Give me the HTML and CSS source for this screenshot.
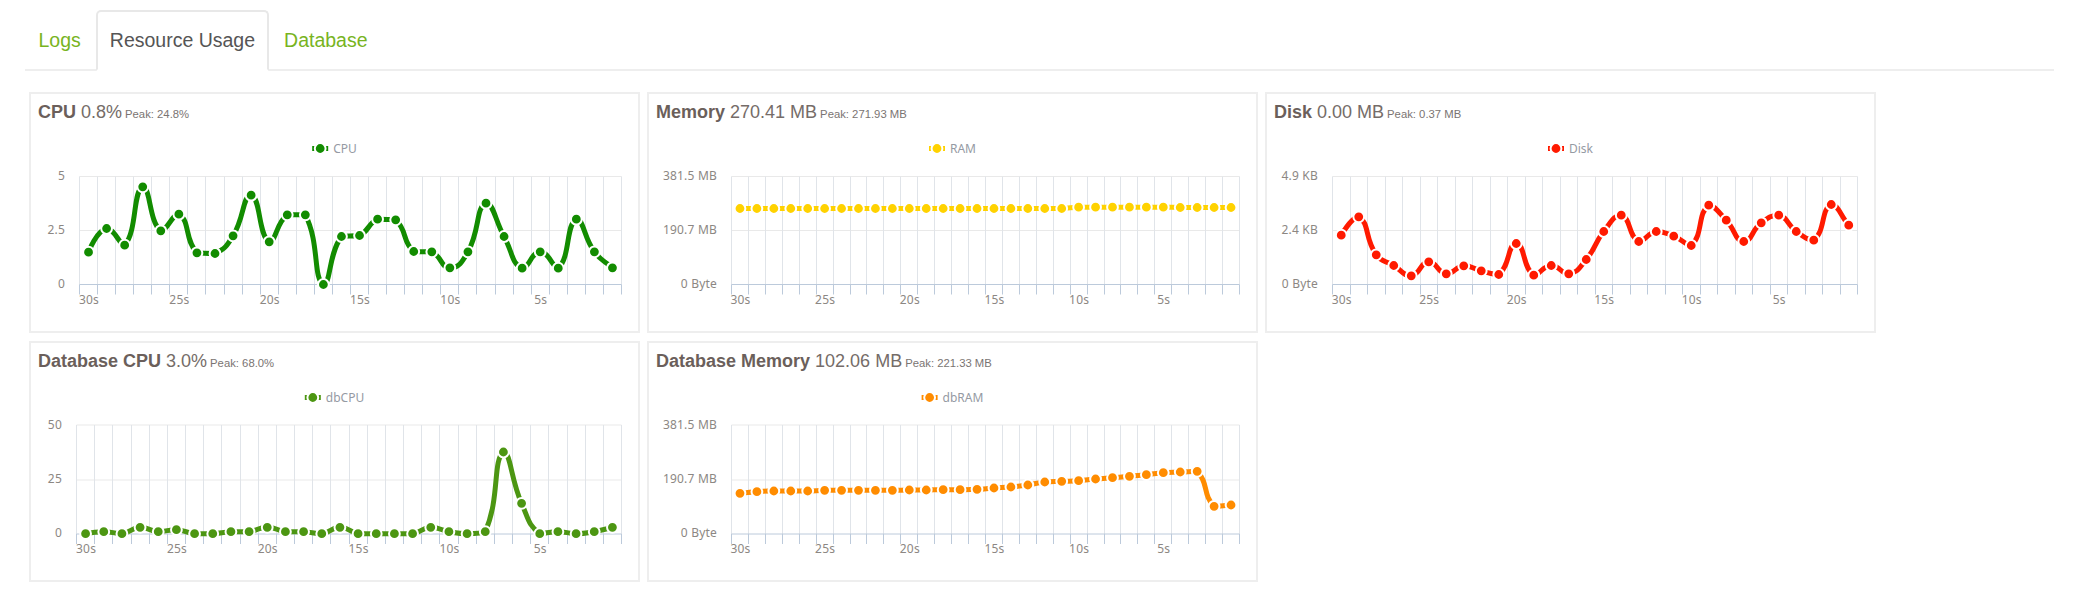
FILE: index.html
```html
<!DOCTYPE html>
<html lang="en">
<head>
<meta charset="utf-8">
<title>Resource Usage</title>
<link rel="stylesheet" href="styles.css">
</head>
<body>
<ul class="tabs">
  <li><a href="#logs">Logs</a></li>
  <li class="active"><a href="#usage">Resource Usage</a></li>
  <li><a href="#database">Database</a></li>
</ul>
<main class="grid">
  <section class="card">
    <h3 class="title"><b>CPU</b> 0.8% <small>Peak: 24.8%</small></h3>
    <svg class="chart" id="cpu" viewBox="0 0 606 197"></svg>
  </section>
  <section class="card">
    <h3 class="title"><b>Memory</b> 270.41 MB <small>Peak: 271.93 MB</small></h3>
    <svg class="chart" id="ram" viewBox="0 0 606 197"></svg>
  </section>
  <section class="card">
    <h3 class="title"><b>Disk</b> 0.00 MB <small>Peak: 0.37 MB</small></h3>
    <svg class="chart" id="disk" viewBox="0 0 606 197"></svg>
  </section>
  <section class="card">
    <h3 class="title"><b>Database CPU</b> 3.0% <small>Peak: 68.0%</small></h3>
    <svg class="chart" id="dbcpu" viewBox="0 0 606 197"></svg>
  </section>
  <section class="card">
    <h3 class="title"><b>Database Memory</b> 102.06 MB <small>Peak: 221.33 MB</small></h3>
    <svg class="chart" id="dbram" viewBox="0 0 606 197"></svg>
  </section>
</main>
<script src="charts.js"></script>
</body>
</html>
```
FILE: styles.css
```css
* { box-sizing: border-box; }
html, body { margin: 0; padding: 0; background: #fff; }
body { font-family: "Liberation Sans", Arial, sans-serif; overflow: hidden; }

.tabs {
  display: flex;
  list-style: none;
  width: 2029px;
  height: 61px;
  margin: 10px 0 0 25px;
  padding: 0;
  border-bottom: 2px solid #eeeeee;
}
.tabs li { margin-right: 2px; height: 61px; }
.tabs a {
  display: block;
  height: 61px;
  padding: 14px 11.5px 15px;
  border: 2px solid transparent;
  border-radius: 5px 5px 0 0;
  font-size: 19.5px;
  line-height: 28px;
  color: #78b41e;
  text-decoration: none;
}
.tabs .active a {
  color: #555555;
  background: #fff;
  border-color: #e8e8e8 #e8e8e8 #fff;
}

.grid {
  display: grid;
  grid-template-columns: repeat(3, 611px);
  grid-auto-rows: 241px;
  column-gap: 7px;
  row-gap: 8px;
  margin: 21px 0 0 29px;
}
.card {
  border: 2px solid #eeeeee;
  background: #fff;
  overflow: hidden;
}
.title {
  height: 40px;
  margin: 0;
  padding: 6px 7px 0;
  font-size: 18px;
  font-weight: 400;
  line-height: 24px;
  color: #756c68;
}
.title b { font-weight: 700; color: #6b5f5b; }
.title small { margin-left: -2px; font-size: 11.3px; color: #7a7472; }

.chart { display: block; width: 606px; height: 197px; }
.grid-v { stroke: #e0e4e9; stroke-width: 1; }
.grid-h { stroke: #e9e9e9; stroke-width: 1; }
.axis { stroke: #bccadb; stroke-width: 1; }
.label { font-family: "Noto Sans", sans-serif; font-size: 12px; letter-spacing: 0.2px; fill: #8c8783; }
.legend-text { font-family: "Noto Sans", sans-serif; font-size: 12px; fill: #959aa3; }
.line { fill: none; stroke-width: 5; stroke-linejoin: bevel; }
.dot { stroke: #fff; stroke-width: 2; }
```
FILE: charts.js
```js
var NS = "http://www.w3.org/2000/svg";
var charts = [
  { id: "cpu", color: "#128c00", name: "CPU", left: 48.5, row: 0, ticks: ["5", "2.5", "0"],
    data: [97,168,118,293,161,211,95,93,146,268,128,209,209,0,144,147,196,194,99,98,50,98,244,144,49,98,49,196,98,50] },
  { id: "ram", color: "#ffd200", name: "RAM", left: 82.5, row: 0, ticks: ["381.5 MB", "190.7 MB", "0 Byte"],
    data: [228,228,228,228,228,228,228,228,228,228,228,228,228,228,228,228,228,228,228,228,232,232,232,232,232,232,231,231,231,231] },
  { id: "disk", color: "#ff1a00", name: "Disk", left: 65.5, row: 0, ticks: ["4.9 KB", "2.4 KB", "0 Byte"],
    data: [148,203,89,57,26,68,32,56,41,30,123,28,57,32,75,159,208,129,159,145,117,238,193,129,185,208,159,133,240,178] },
  { id: "dbcpu", color: "#4c9612", name: "dbCPU", left: 45.5, row: 1, ticks: ["50", "25", "0"],
    data: [1,7,1,20,7,13,1,1,7,7,20,7,7,1,20,1,1,1,1,20,7,1,7,246,92,1,7,1,7,20] },
  { id: "dbram", color: "#ff8c00", name: "dbRAM", left: 82.5, row: 1, ticks: ["381.5 MB", "190.7 MB", "0 Byte"],
    data: [122,127,129,129,129,131,131,131,131,131,132,132,133,133,134,138,141,147,156,158,160,165,169,173,178,184,186,188,83,87] }
];
var XLABELS = ["30s", "25s", "20s", "15s", "10s", "5s"];
var RIGHT = 590.5;

function el(svg, tag, attrs, text) {
  var node = document.createElementNS(NS, tag);
  for (var key in attrs) node.setAttribute(key, attrs[key]);
  if (text) node.textContent = text;
  svg.appendChild(node);
  return node;
}

function clamp(v, a, b) {
  return Math.max(Math.min(a, b), Math.min(Math.max(a, b), v));
}

/* Bezier through every point; control points stay inside each segment's y range. */
function smoothPath(pts) {
  var s = 0.5, d = "M" + pts[0][0] + " " + pts[0][1], cx = pts[0][0], cy = pts[0][1];
  for (var i = 1; i < pts.length; i++) {
    var p = pts[i], prev = pts[i - 1], next = pts[i + 1] || p;
    var vx = next[0] - prev[0], vy = next[1] - prev[1];
    var a = Math.hypot(p[0] - prev[0], p[1] - prev[1]);
    var b = Math.hypot(next[0] - p[0], next[1] - p[1]);
    var r = b / (a + b);
    var c2x = p[0] - vx * s * (1 - r);
    var c2y = clamp(p[1] - vy * s * (1 - r), prev[1], p[1]);
    d += "C" + cx.toFixed(2) + " " + clamp(cy, prev[1], p[1]).toFixed(2) + " " + c2x.toFixed(2) + " " + c2y.toFixed(2) + " " + p[0].toFixed(2) + " " + p[1].toFixed(2);
    cx = p[0] + vx * s * r;
    cy = p[1] + vy * s * r;
  }
  return d;
}

charts.forEach(function (c) {
  var svg = document.getElementById(c.id);
  var top = c.row ? 42 : 42.5, mid = c.row ? 97 : 96.5, bottom = c.row ? 151 : 150.5;
  var tickEnd = bottom + 10, labelY = bottom + 15;
  var step = (RIGHT - c.left) / 30;
  var i, x;

  [top, mid].forEach(function (y) {
    el(svg, "line", { "class": "grid-h", x1: c.left, x2: RIGHT, y1: y, y2: y });
  });
  for (i = 0; i <= 30; i++) {
    x = Math.round(c.left + step * i - 0.5) + 0.5;
    el(svg, "line", { "class": "grid-v", x1: x, x2: x, y1: top, y2: bottom });
    el(svg, "line", { "class": "axis", x1: x, x2: x, y1: bottom, y2: tickEnd });
  }
  el(svg, "line", { "class": "axis", x1: c.left, x2: RIGHT, y1: bottom, y2: bottom });

  [top, mid, bottom].forEach(function (y, n) {
    var nudge = c.row && n > 0 ? 1 : 0;
    el(svg, "text", { "class": "label", x: c.left - 14.5, y: y + 3.5 - nudge, "text-anchor": "end" }, c.ticks[n]);
  });
  XLABELS.forEach(function (label, n) {
    el(svg, "text", { "class": "label", x: c.left + step * (n * 5 + 0.5) + 0.5, y: labelY + 4, "text-anchor": "middle" }, label);
  });

  var pts = c.data.map(function (h, n) {
    return [c.left + step * (n + 0.5), bottom - h / 3];
  });
  el(svg, "path", { "class": "line", d: smoothPath(pts), stroke: c.color });
  pts.forEach(function (p) {
    el(svg, "circle", { "class": "dot", cx: p[0], cy: p[1], r: 5.4, fill: c.color });
  });

  /* legend: marker + name, centred on the card's chart */
  var probe = el(svg, "text", { "class": "legend-text", x: 0, y: 19 }, c.name);
  var w = probe.getComputedTextLength();
  var startX = 303 - (16 + 5 + w) / 2 + 0.5;
  probe.setAttribute("x", startX + 21);
  el(svg, "line", { x1: startX, x2: startX + 16, y1: 14.5, y2: 14.5, stroke: c.color, "stroke-width": 5 });
  el(svg, "circle", { "class": "dot", cx: startX + 8, cy: 14.5, r: 5.4, fill: c.color });
});
```
